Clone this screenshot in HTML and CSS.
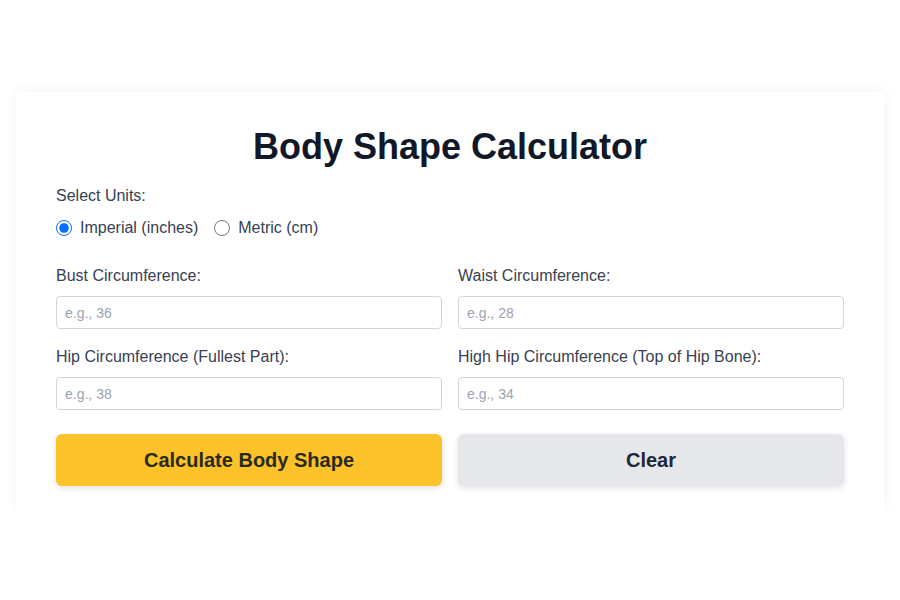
FILE: index.html
```html
<!DOCTYPE html>
<html lang="en">
<head>
  <meta charset="UTF-8" />
  <meta name="viewport" content="width=device-width, initial-scale=1.0"/>
  <title>Body Shape Calculator</title>
  <link rel="stylesheet" href="styles.css">
</head>
<body>
  <div class="calculator">
    <h1>Body Shape Calculator</h1>

    <div class="units">
      <p class="units-label">Select Units:</p>
      <div class="radios">
        <label class="radio"><input type="radio" name="units" value="imperial" checked> Imperial (inches)</label>
        <label class="radio"><input type="radio" name="units" value="metric"> Metric (cm)</label>
      </div>
    </div>

    <div class="fields">
      <div class="field">
        <label for="bust">Bust Circumference:</label>
        <input type="number" id="bust" placeholder="e.g., 36">
      </div>
      <div class="field">
        <label for="waist">Waist Circumference:</label>
        <input type="number" id="waist" placeholder="e.g., 28">
      </div>
      <div class="field">
        <label for="hip">Hip Circumference (Fullest Part):</label>
        <input type="number" id="hip" placeholder="e.g., 38">
      </div>
      <div class="field">
        <label for="highhip">High Hip Circumference (Top of Hip Bone):</label>
        <input type="number" id="highhip" placeholder="e.g., 34">
      </div>
    </div>

    <div class="actions">
      <button class="btn calc">Calculate Body Shape</button>
      <button class="btn clear">Clear</button>
    </div>
  </div>
</body>
</html>
```

FILE: styles.css
```css
body {
  margin: 0;
  background: #fff;
  font-family: 'Liberation Sans', Arial, sans-serif;
  color: #374151;
  padding-top: 92px;
}

.calculator {
  background: #fff;
  margin: 0 16px;
  padding: 33px 40px 25px;
  box-shadow: 0 0 14px rgba(0,0,0,0.05);
}

h1 {
  margin: 0 0 15px;
  text-align: center;
  font-size: 36px;
  line-height: 44px;
  font-weight: bold;
  color: #111827;
}

.units-label {
  margin: 0 0 8px;
  font-size: 16px;
  line-height: 24px;
}

.radios {
  display: flex;
  gap: 16px;
  margin-bottom: 24px;
}

.radio {
  display: flex;
  align-items: center;
  gap: 8px;
  font-size: 16px;
  line-height: 24px;
}

.radio input {
  margin: 0;
  width: 16px;
  height: 16px;
  accent-color: #0a6cff;
}

.fields {
  display: grid;
  grid-template-columns: 1fr 1fr;
  column-gap: 16px;
  row-gap: 16px;
}

.field label {
  display: block;
  font-size: 16px;
  line-height: 24px;
  margin-bottom: 8px;
}

.field input {
  box-sizing: border-box;
  width: 100%;
  height: 33px;
  padding: 0 8px;
  border: 1px solid #d1d5db;
  border-radius: 4px;
  font-family: inherit;
  font-size: 14px;
  color: #111827;
}

.field input::placeholder {
  color: #9ca3af;
}

.actions {
  display: grid;
  grid-template-columns: 1fr 1fr;
  column-gap: 16px;
  margin-top: 24px;
}

.btn {
  height: 52px;
  border: none;
  border-radius: 6px;
  font-family: inherit;
  font-size: 20px;
  font-weight: bold;
  color: #1f2937;
  cursor: pointer;
  box-shadow: 0 2px 6px rgba(0,0,0,0.12);
}

.calc {
  background: #fcc229;
  color: #2a2a1e;
}

.clear {
  background: #e5e7eb;
}
```
